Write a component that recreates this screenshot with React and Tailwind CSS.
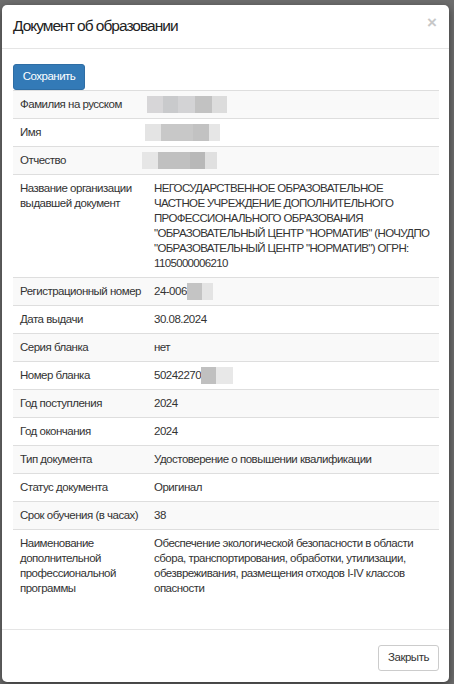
import React from "react";

const Blur = ({ segs, className = "" }) => (
  <span className={"inline-flex h-[17px] my-[-1px] shrink-0 " + className}>
    {segs.map(([w, c], i) => (
      <span key={i} style={{ width: w, background: c }} className="h-full block" />
    ))}
  </span>
);

const rows = [
  {
    label: ["Фамилия на русском"],
    value: (
      <Blur
        className="ml-[-7px]"
        segs={[
          [16, "#d7d6d8"],
          [15, "#c9cacc"],
          [17, "#d3d3d5"],
          [17, "#c2c2c2"],
          [15, "#dcdcdc"],
        ]}
      />
    ),
  },
  {
    label: ["Имя"],
    value: (
      <Blur
        className="ml-[-9px]"
        segs={[
          [16, "#e4e4e4"],
          [32, "#c8c8c8"],
          [16, "#c2c2c2"],
          [11, "#e6e6e6"],
        ]}
      />
    ),
  },
  {
    label: ["Отчество"],
    value: (
      <Blur
        className="ml-[-12px]"
        segs={[
          [16, "#e6e6e6"],
          [32, "#c0c0c0"],
          [15, "#b8b8b8"],
          [12, "#e0e0e0"],
        ]}
      />
    ),
  },
  {
    label: ["Название организации", "выдавшей документ"],
    caps: true,
    lines: [
      "НЕГОСУДАРСТВЕННОЕ ОБРАЗОВАТЕЛЬНОЕ",
      "ЧАСТНОЕ УЧРЕЖДЕНИЕ ДОПОЛНИТЕЛЬНОГО",
      "ПРОФЕССИОНАЛЬНОГО ОБРАЗОВАНИЯ",
      "\"ОБРАЗОВАТЕЛЬНЫЙ ЦЕНТР \"НОРМАТИВ\" (НОЧУДПО",
      "\"ОБРАЗОВАТЕЛЬНЫЙ ЦЕНТР \"НОРМАТИВ\") ОГРН:",
      "1105000006210",
    ],
  },
  {
    label: ["Регистрационный номер"],
    value: (
      <>
        <span>24-006</span>
        <Blur segs={[[15, "#c4c4c4"], [11, "#e4e4e4"]]} />
      </>
    ),
  },
  { label: ["Дата выдачи"], lines: ["30.08.2024"] },
  { label: ["Серия бланка"], lines: ["нет"] },
  {
    label: ["Номер бланка"],
    value: (
      <>
        <span>50242270</span>
        <Blur segs={[[15, "#c0c0c0"], [17, "#e8e8e8"]]} />
      </>
    ),
  },
  { label: ["Год поступления"], lines: ["2024"] },
  { label: ["Год окончания"], lines: ["2024"] },
  { label: ["Тип документа"], lines: ["Удостоверение о повышении квалификации"] },
  { label: ["Статус документа"], lines: ["Оригинал"] },
  { label: ["Срок обучения (в часах)"], lines: ["38"] },
  {
    label: ["Наименование", "дополнительной", "профессиональной", "программы"],
    lines: [
      "Обеспечение экологической безопасности в области",
      "сбора, транспортирования, обработки, утилизации,",
      "обезвреживания, размещения отходов I-IV классов",
      "опасности",
    ],
  },
];

export default function App() {
  return (
    <div
      className="h-screen overflow-hidden bg-[#6e6e6e] pt-[5px] pl-[2px]"
      style={{ fontFamily: '"Liberation Sans", Arial, sans-serif' }}
    >
      <div className="w-[447px] bg-white rounded-[5px] shadow-[0_3px_9px_rgba(0,0,0,0.5)] text-[#333]">
        {/* Header */}
        <div className="flex items-center justify-between h-[44px] pl-[11px] pr-[12px] border-b border-[#e5e5e5]">
          <h4 className="text-[15.5px] leading-[17px] tracking-[-1px] text-[#222] font-normal mb-[2px]">
            Документ об образовании
          </h4>
          <span className="text-[17px] font-bold leading-none text-[#c8c8c8] mb-[8px]">×</span>
        </div>

        {/* Body */}
        <div className="pl-[11px] pr-[10px] pt-[15px] pb-[27px]">
          <button className="w-[72px] h-[26px] bg-[#337ab7] border border-[#2e6da4] rounded-[3px] text-white text-[11.5px] tracking-[-0.5px] flex items-center justify-center">
            Сохранить
          </button>
          <div className="text-[11.5px] leading-[15px] tracking-[-0.5px]">
            {rows.map((r, i) => (
              <div
                key={i}
                className={
                  "flex border-t border-[#dedede] " + (i % 2 === 0 ? "bg-[#f9f9f9]" : "bg-white")
                }
              >
                <div className="w-[135px] shrink-0 pl-[7px] pr-[2px] py-[6px] whitespace-nowrap">
                  {r.label.map((l, j) => (
                    <div key={j}>{l}</div>
                  ))}
                </div>
                <div
                  className={
                    "flex-1 pl-[6px] pr-[2px] py-[6px] whitespace-nowrap " +
                    (r.caps ? "tracking-[-0.65px]" : "")
                  }
                >
                  {r.value ? (
                    <div className="flex items-center h-[15px]">{r.value}</div>
                  ) : (
                    r.lines.map((l, j) => <div key={j}>{l}</div>)
                  )}
                </div>
              </div>
            ))}
          </div>
        </div>

        {/* Footer */}
        <div className="flex justify-end border-t border-[#e5e5e5] pt-[15px] pb-[11px] pr-[10px]">
          <button className="w-[61px] h-[26px] bg-white border border-[#cccccc] rounded-[3px] text-[#333] text-[11.5px] tracking-[-0.5px] flex items-center justify-center">
            Закрыть
          </button>
        </div>
      </div>
    </div>
  );
}
